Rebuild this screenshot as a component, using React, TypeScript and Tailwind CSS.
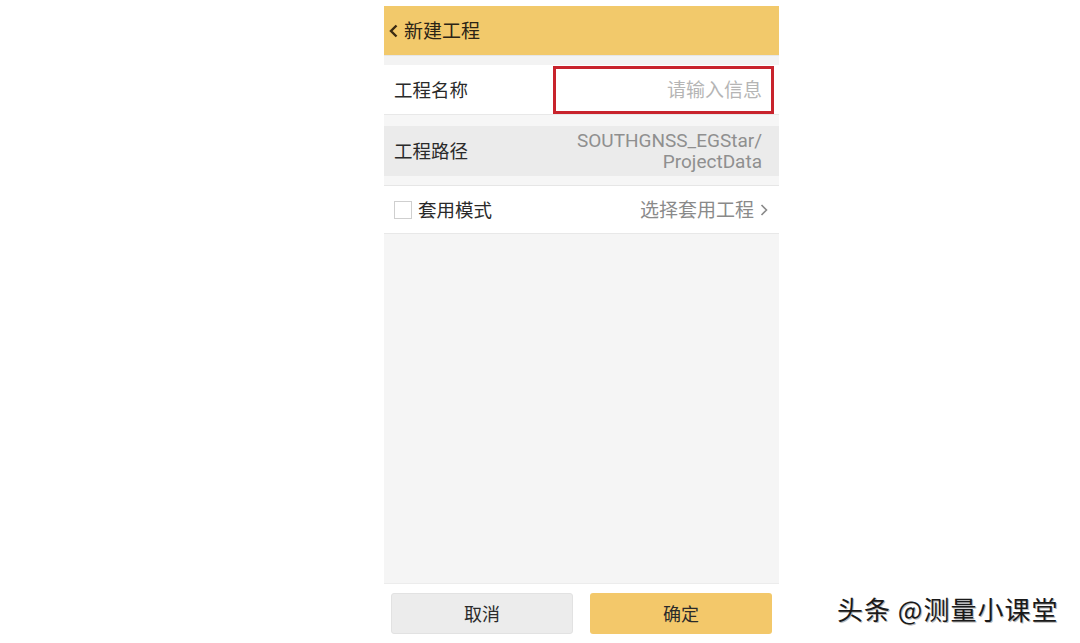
import React from "react";

const cn = '"Noto Sans CJK SC", "Liberation Sans", sans-serif';

const App: React.FC = () => {
  return (
    <div className="relative w-[1080px] h-[643px] bg-white overflow-hidden" style={{ fontFamily: cn }}>
      <div className="ml-[384px] w-[395px] h-[643px] flex flex-col pt-[6px]">
        {/* header */}
        <div className="h-[49px] bg-[#f2c96b] flex items-center pl-[4px]">
          <svg width="12" height="16" viewBox="0 0 12 16" className="mr-[4px]">
            <path d="M8.5 2.5 L3 8 L8.5 13.5" fill="none" stroke="#3a2a12" strokeWidth="2.4" />
          </svg>
          <span className="text-[19px] text-[#2b2416]">新建工程</span>
        </div>

        <div className="h-[10px] bg-[#f3f3f3] border-t border-[#e6e6e6]" />

        {/* name row */}
        <div className="h-[50px] bg-white flex items-center border-b border-[#e8e8e8]">
          <span className="pl-[10px] text-[18.5px] text-[#2a2a2a] w-[169px]">工程名称</span>
          <div className="h-[48px] w-[221px] border-[3px] border-[#c8232c] flex items-center justify-end pr-[9px]">
            <span className="text-[19px] text-[#b5b5b5]">请输入信息</span>
          </div>
        </div>

        <div className="h-[11px] bg-[#f6f6f6]" />

        {/* path row */}
        <div className="h-[50px] bg-[#ebebeb] flex items-center justify-between pl-[10px] pr-[17px]">
          <span className="text-[18.5px] text-[#2a2a2a]">工程路径</span>
          <div className="text-right text-[19px] leading-[21px] text-[#8f8f8f]" style={{ fontFamily: '"Roboto", "Liberation Sans", sans-serif' }}>
            <div>SOUTHGNSS_EGStar/</div>
            <div>ProjectData</div>
          </div>
        </div>

        <div className="h-[10px] bg-[#f6f6f6] border-b border-[#e6e6e6]" />

        {/* template row */}
        <div className="h-[48px] bg-white flex items-center justify-between pl-[10px] pr-[10px] border-b border-[#e8e8e8]">
          <div className="flex items-center">
            <div className="w-[18px] h-[18px] border border-[#cfcfcf] mr-[6px]" />
            <span className="text-[18.5px] text-[#2a2a2a]">套用模式</span>
          </div>
          <div className="flex items-center text-[19px] text-[#8a8a8a]">
            <span>选择套用工程</span>
            <svg width="10" height="14" viewBox="0 0 10 14" className="ml-[5px]">
              <path d="M2.5 2 L7.5 7 L2.5 12" fill="none" stroke="#8a8a8a" strokeWidth="1.6" />
            </svg>
          </div>
        </div>

        {/* body */}
        <div className="flex-1 bg-[#f5f5f5] border-b border-[#ececec]" />

        {/* bottom buttons */}
        <div className="h-[59px] bg-white flex items-start pt-[9px] px-[7px] gap-[17px]">
          <button className="w-[182px] h-[41px] rounded-[3px] bg-[#ececec] border border-[#e2e2e2] text-[18px] text-[#2a2a2a]">取消</button>
          <button className="w-[182px] h-[41px] rounded-[3px] bg-[#f3c86a] text-[18px] text-[#2a2a2a]">确定</button>
        </div>
      </div>

      {/* watermark */}
      <div
        className="absolute left-[837px] top-[591px] text-[26px] leading-[36px] text-[#1a1a1a] tracking-[1px] whitespace-nowrap"
        style={{ textShadow: "1px 1px 0 #bbb" }}
      >
        头条 @测量小课堂
      </div>
    </div>
  );
};

export default App;
